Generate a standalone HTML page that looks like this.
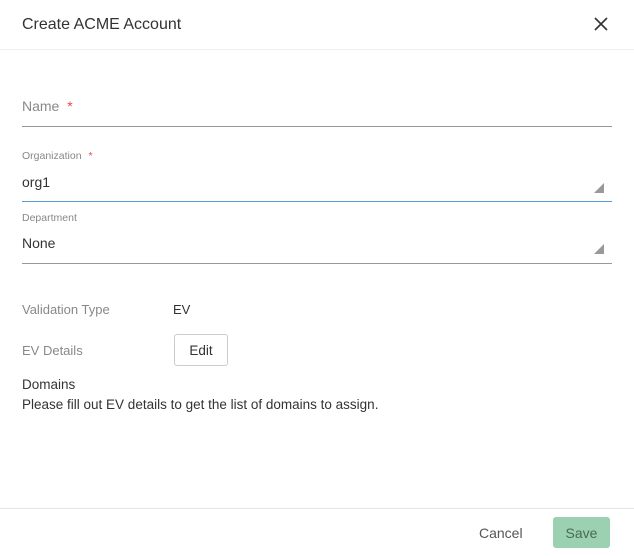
<!DOCTYPE html>
<html><head><style>
body{margin:0;width:634px;height:556px;background:#fff;font-family:"Liberation Sans",sans-serif;position:relative;overflow:hidden;color:#333}
.a{position:absolute;white-space:nowrap}
.line{position:absolute;left:22px;width:590px;height:1px;background:#999}
.tri{position:absolute;width:0;height:0;border-left:10px solid transparent;border-bottom:10px solid #999}
</style></head><body>
<div class="a" style="left:22px;top:16px;font-size:16px;color:#333">Create ACME Account</div>
<svg class="a" style="left:594px;top:17px" width="14" height="14" viewBox="0 0 14 14"><path d="M1 1L13 13M13 1L1 13" stroke="#333" stroke-width="1.6"/></svg>
<div class="a" style="left:0;top:49px;width:634px;height:1px;background:#eee"></div>

<div class="a" style="left:22px;top:98px;font-size:14px;color:#888">Name <span style="color:#e44;margin-left:4px">*</span></div>
<div class="line" style="top:126px"></div>

<div class="a" style="left:22px;top:150px;font-size:10.5px;color:#888">Organization <span style="color:#e44;margin-left:4px">*</span></div>
<div class="a" style="left:22px;top:174px;font-size:14px;color:#333">org1</div>
<div class="tri" style="left:594px;top:183px"></div>
<div class="line" style="top:201px;background:#5b9bd5"></div>

<div class="a" style="left:22px;top:212px;font-size:10.5px;color:#888">Department</div>
<div class="a" style="left:22px;top:235px;font-size:14px;color:#333">None</div>
<div class="tri" style="left:594px;top:244px"></div>
<div class="line" style="top:263px"></div>

<div class="a" style="left:22px;top:302px;font-size:13px;color:#888">Validation Type</div>
<div class="a" style="left:173px;top:302px;font-size:13px;color:#333">EV</div>
<div class="a" style="left:22px;top:343px;font-size:13px;color:#888">EV Details</div>
<div class="a" style="left:174px;top:334px;width:52px;height:30px;border:1px solid #ccc;border-radius:3px;font-size:13.5px;line-height:31px;text-align:center;color:#333">Edit</div>
<div class="a" style="left:22px;top:377px;font-size:13.5px;color:#333">Domains</div>
<div class="a" style="left:22px;top:397px;font-size:13.5px;color:#333">Please fill out EV details to get the list of domains to assign.</div>

<div class="a" style="left:0;top:508px;width:634px;height:1px;background:#e5e5e5"></div>
<div class="a" style="left:479px;top:525px;font-size:14px;color:#555">Cancel</div>
<div class="a" style="left:553px;top:517px;width:57px;height:31px;background:#9bd0b0;border-radius:3px;font-size:14px;line-height:32px;text-align:center;color:#4a6b57">Save</div>
</body></html>
